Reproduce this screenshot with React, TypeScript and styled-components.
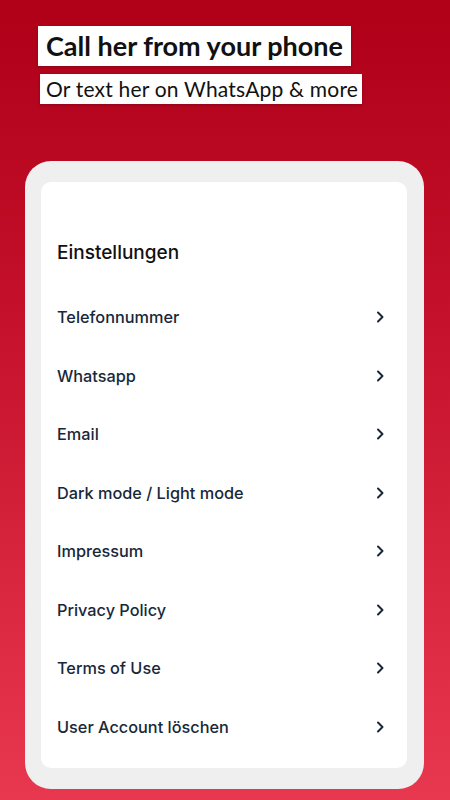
import { createGlobalStyle } from 'styled-components';
import styled from 'styled-components';

const GlobalStyle = createGlobalStyle`
    html, body {
        margin: 0;
        padding: 0;
    }
    body {
        font-family: Lato, 'Liberation Sans', sans-serif;
    }
`;

const Screen = styled.div`
    width: 450px;
    height: 800px;
    overflow: hidden;
    background: linear-gradient(180deg, #af0018 0%, #c5112b 40%, #e8384f 100%);
    display: flex;
    flex-direction: column;
    align-items: flex-start;
`;

const Headline = styled.div`
    display: flex;
    flex-direction: column;
    align-items: flex-start;
    gap: 8px;
    padding: 26px 0 0 38px;
`;

const Tag = styled.span<{ big?: boolean }>`
    background: #fff;
    color: #111;
    font-family: Lato, sans-serif;
    font-weight: ${props => (props.big ? 700 : 400)};
    font-size: ${props => (props.big ? '27px' : '21px')};
    line-height: ${props => (props.big ? '40px' : '30px')};
    padding: ${props => (props.big ? '0 8px' : '0 4px 0 6px')};
    margin-left: ${props => (props.big ? '0' : '2px')};
    letter-spacing: ${props => (props.big ? '0' : '0.2px')};
    box-shadow: 0 1px 3px rgba(0, 0, 0, 0.25);
`;

const Phone = styled.div`
    margin: 57px 0 0 25px;
    width: 399px;
    height: 628px;
    box-sizing: border-box;
    background: #efefef;
    border-radius: 26px;
    padding: 21px 17px 21px 16px;
    display: flex;
`;

const Panel = styled.div`
    flex: 1;
    background: #fff;
    border-radius: 10px;
    padding: 57px 16px 0 16px;
    display: flex;
    flex-direction: column;
`;

const Title = styled.h2`
    margin: 0 0 21px 0;
    font-family: Inter, sans-serif;
    font-weight: 500;
    font-size: 19px;
    color: #111;
    line-height: 28px;
`;

const Row = styled.div`
    height: 58.5px;
    display: flex;
    align-items: center;
    justify-content: space-between;
    padding-right: 5px;
`;

const Label = styled.span`
    font-family: Inter, sans-serif;
    font-weight: 500;
    font-size: 16.3px;
    color: #18283a;
`;

const Chevron = () => (
    <svg width='12' height='14' viewBox='0 0 12 14' fill='none'>
        <path
            d='M4 2.5 L8.5 7 L4 11.5'
            stroke='#18283a'
            strokeWidth='2'
            strokeLinecap='round'
            strokeLinejoin='round'
        />
    </svg>
);

const items = [
    'Telefonnummer',
    'Whatsapp',
    'Email',
    'Dark mode / Light mode',
    'Impressum',
    'Privacy Policy',
    'Terms of Use',
    'User Account löschen',
];

const App: React.FC = () => {
    return (
        <Screen>
            <GlobalStyle />
            <Headline>
                <Tag big>Call her from your phone</Tag>
                <Tag>Or text her on WhatsApp &amp; more</Tag>
            </Headline>
            <Phone>
                <Panel>
                    <Title>Einstellungen</Title>
                    {items.map(item => (
                        <Row key={item}>
                            <Label>{item}</Label>
                            <Chevron />
                        </Row>
                    ))}
                </Panel>
            </Phone>
        </Screen>
    );
};

export default App;
